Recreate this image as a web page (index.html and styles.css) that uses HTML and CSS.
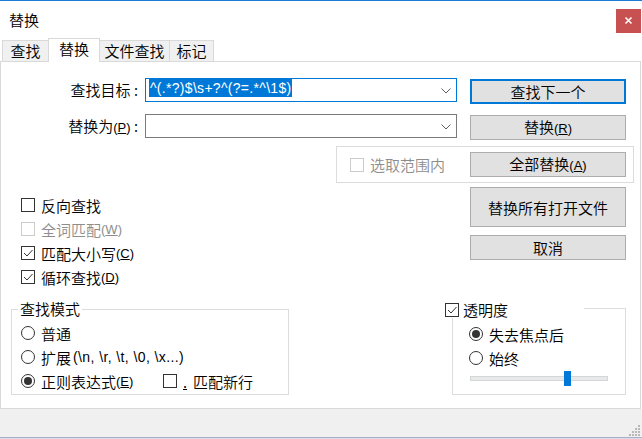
FILE: index.html
```html
<!DOCTYPE html>
<html lang="zh-CN">
<head>
<meta charset="utf-8">
<title>替换</title>
<link rel="stylesheet" href="styles.css">
</head>
<body>
<div class="window">
  <div class="titlebar">
    <span class="title">替换</span>
    <span class="close"><svg width="25" height="24" viewBox="0 0 25 24"><path d="M9.5 8.5 L15.5 14.5 M15.5 8.5 L9.5 14.5" stroke="#fff" stroke-width="1.6" fill="none"/></svg></span>
  </div>
  <div class="tabs">
    <div class="tab w1">查找</div>
    <div class="tab w2 active">替换</div>
    <div class="tab w3">文件查找</div>
    <div class="tab w4">标记</div>
  </div>
  <div class="panel">
    <div class="row row-find">
      <div class="flabel">查找目标 :</div>
      <div class="combo focus">
        <span class="sel">^(.*?)$\s+?^(?=.*^\1$)</span>
        <svg class="chev" width="10" height="6" viewBox="0 0 10 6"><path d="M0.5 0.5 L5 5 L9.5 0.5" stroke="#5f5f5f" stroke-width="1" fill="none"/></svg>
      </div>
      <button class="btn default">查找下一个</button>
    </div>
    <div class="row row-repl">
      <div class="flabel">替换为<span class="a">(<u>P</u>)</span> :</div>
      <div class="combo">
        <span></span>
        <svg class="chev" width="10" height="6" viewBox="0 0 10 6"><path d="M0.5 0.5 L5 5 L9.5 0.5" stroke="#5f5f5f" stroke-width="1" fill="none"/></svg>
      </div>
      <button class="btn btn-r">替换<span class="a">(<u>R</u>)</span></button>
    </div>
    <div class="scope">
      <div class="opt dis"><span class="box"></span>选取范围内</div>
      <button class="btn btn-in">全部替换<span class="a">(<u>A</u>)</span></button>
    </div>
    <div class="mid">
      <div class="opts">
        <div class="opt"><span class="box"></span>反向查找</div>
        <div class="opt dis"><span class="box"></span>全词匹配<span class="a">(<u>W</u>)</span></div>
        <div class="opt"><span class="box"><svg width="12" height="12" viewBox="0 0 12 12"><path d="M2 6 L5 9 L10.5 3" stroke="#333" stroke-width="1" fill="none"/></svg></span>匹配大小写<span class="a">(<u>C</u>)</span></div>
        <div class="opt"><span class="box"><svg width="12" height="12" viewBox="0 0 12 12"><path d="M2 6 L5 9 L10.5 3" stroke="#333" stroke-width="1" fill="none"/></svg></span>循环查找<span class="a">(<u>D</u>)</span></div>
      </div>
      <div class="btncol">
        <button class="btn btn-tall">替换所有打开文件</button>
        <button class="btn btn-cancel">取消</button>
      </div>
    </div>
    <div class="bottom">
      <div class="group mode">
        <div class="legend">查找模式</div>
        <div class="opt rad"><span class="radio"></span>普通</div>
        <div class="opt rad"><span class="radio"></span>扩展 <span class="lat">(\n, \r, \t, \0, \x...)</span></div>
        <div class="opt rad">
          <span class="rlabel"><span class="radio on"></span>正则表达式<span class="a">(<u>E</u>)</span></span>
          <span class="box"></span><u class="dot">.</u>匹配新行
        </div>
      </div>
      <div class="group trans">
        <div class="legend tlegend"><span class="box"><svg width="12" height="12" viewBox="0 0 12 12"><path d="M2 6 L5 9 L10.5 3" stroke="#333" stroke-width="1" fill="none"/></svg></span>透明度</div>
        <div class="opt trad"><span class="radio on"></span>失去焦点后</div>
        <div class="opt trad"><span class="radio"></span>始终</div>
        <div class="slider"><div class="track"><div class="thumb"></div></div></div>
      </div>
    </div>
  </div>
  <div class="footer">
    <svg class="grip" width="11" height="11" viewBox="0 0 11 11" fill="#b9b9b9">
      <rect x="9" y="0" width="2" height="2"/>
      <rect x="6" y="3" width="2" height="2"/><rect x="9" y="3" width="2" height="2"/>
      <rect x="3" y="6" width="2" height="2"/><rect x="6" y="6" width="2" height="2"/><rect x="9" y="6" width="2" height="2"/>
      <rect x="0" y="9" width="2" height="2"/><rect x="3" y="9" width="2" height="2"/><rect x="6" y="9" width="2" height="2"/><rect x="9" y="9" width="2" height="2"/>
    </svg>
  </div>
</div>
</body>
</html>
```
FILE: styles.css
```css
* { box-sizing: border-box; }
html, body { margin: 0; padding: 0; }
body {
  width: 642px;
  height: 439px;
  overflow: hidden;
  background: #dcdde6;
  font-family: "Noto Sans CJK SC", "Noto Sans", sans-serif;
  font-size: 15px;
  font-weight: 350;
  color: #000;
}
.window {
  width: 642px;
  height: 438px;
  background: #fff;
  border-top: 1px solid #1a7ad4;
  display: flex;
  flex-direction: column;
}
.titlebar {
  height: 37px;
  flex: none;
  display: flex;
  align-items: flex-start;
  justify-content: space-between;
}
.title { margin: 9px 0 0 9px; line-height: 20px; }
.close {
  width: 25px;
  height: 24px;
  margin: 8px 1px 0 0;
  background: #c75050;
  display: flex;
}
.tabs {
  height: 23px;
  flex: none;
  display: flex;
  align-items: flex-end;
  padding-left: 2px;
}
.tab {
  height: 21px;
  border: 1px solid #d9d9d9;
  border-bottom: none;
  background: #f0f0f0;
  text-align: center;
  line-height: 19px;
  margin-right: -1px;
}
.tab.active {
  height: 24px;
  background: #fff;
  margin-bottom: -1px;
  position: relative;
}
.w1 { width: 47px; }
.w2 { width: 52px; }
.w3 { width: 71px; }
.w4 { width: 45px; }
.panel {
  width: 641px;
  height: 348px;
  flex: none;
  border: 1px solid #d9d9d9;
  display: flex;
  flex-direction: column;
}
.row { display: flex; align-items: flex-start; }
.row-find { margin-top: 16px; }
.row-repl { margin-top: 10px; }
.flabel {
  width: 144px;
  text-align: right;
  padding-right: 7px;
  line-height: 24px;
  height: 24px;
  white-space: nowrap;
}
.combo {
  width: 312px;
  height: 24px;
  border: 1px solid #7a7a7a;
  background: #fff;
  display: flex;
  align-items: flex-start;
  justify-content: space-between;
  padding-left: 3px;
}
.combo.focus { border-color: #0078d7; }
.sel {
  background: #0078d7;
  color: #fff;
  font-family: "Liberation Sans", Arial, sans-serif;
  font-size: 14px;
  font-weight: 400;
  letter-spacing: 0.3px;
  height: 18px;
  line-height: 18px;
  padding: 0 1px;
  white-space: nowrap;
}
.chev { margin: 9px 5px 0 0; flex: none; }
.btn {
  width: 156px;
  height: 25px;
  border: 1px solid #adadad;
  background: #e1e1e1;
  font: inherit;
  color: #000;
  padding: 0;
  margin: 0 14px 0 auto;
  line-height: 21px;
  flex: none;
}
.btn.default { border: 2px solid #0078d7; margin-top: 1px; }
.btn-r { margin-top: 1px; }
.a {
  font-family: "Liberation Sans", Arial, sans-serif;
  font-size: 13px;
  font-weight: 400;
}
.lat {
  font-family: "Liberation Sans", Arial, sans-serif;
  font-size: 14px;
  font-weight: 400;
  letter-spacing: 0.4px;
  margin-left: 2px;
}
.scope {
  width: 298px;
  height: 37px;
  margin: 6px 6px 0 auto;
  border: 1px solid #dcdcdc;
  display: flex;
  align-items: center;
  padding-left: 13px;
}
.btn-in { margin-right: 7px; }
.opt {
  display: flex;
  align-items: center;
  height: 24px;
  white-space: nowrap;
}
.box {
  width: 14px;
  height: 14px;
  border: 1px solid #333;
  background: #fff;
  margin-right: 6px;
  flex: none;
  display: flex;
}
.dis { color: #8d8d8d; }
.dis .box { border-color: #cccccc; }
.mid { display: flex; align-items: flex-start; }
.opts { padding-left: 20px; margin-top: 10px; }
.btncol {
  margin: 4px 14px 0 auto;
  display: flex;
  flex-direction: column;
  gap: 8px;
}
.btncol .btn { margin: 0; }
.btn-tall { height: 40px; }
.bottom { display: flex; align-items: flex-start; margin-top: 19px; }
.group {
  border: 1px solid #dcdcdc;
  display: flex;
  flex-direction: column;
}
.mode { width: 278px; height: 86px; margin: 1px 0 0 10px; }
.trans { width: 174px; height: 87px; margin: 0 14px 0 auto; }
.legend {
  align-self: flex-start;
  background: #fff;
  height: 16px;
  line-height: 16px;
  margin: -9px 0 4px 6px;
  padding: 0 2px;
}
.tlegend {
  width: 139px;
  margin: -7px 0 4px -8px;
  padding: 0;
  display: flex;
  align-items: center;
}
.tlegend .box { margin-right: 4px; }
.radio {
  width: 14px;
  height: 14px;
  border: 1px solid #333;
  border-radius: 50%;
  background: #fff;
  margin-right: 6px;
  flex: none;
  display: flex;
  align-items: center;
  justify-content: center;
}
.radio.on::after {
  content: "";
  width: 8px;
  height: 8px;
  border-radius: 50%;
  background: #333;
}
.rad { padding-left: 9px; }
.rlabel { width: 142px; display: flex; align-items: center; }
.dot { margin-right: 6px; }
.trad { padding-left: 16px; }
.slider {
  height: 16px;
  display: flex;
  align-items: center;
  padding-left: 17px;
}
.track {
  width: 138px;
  height: 5px;
  background: #e7eaea;
  border: 1px solid #d6d6d6;
  display: flex;
  align-items: center;
}
.thumb {
  width: 7px;
  height: 15px;
  background: #0078d7;
  margin-left: 93px;
  flex: none;
}
.footer {
  height: 29px;
  flex: none;
  background: #f0f0f0;
  border-bottom: 1px solid #a9adc8;
  display: flex;
  justify-content: flex-end;
  align-items: flex-end;
}
.grip { margin: 0 2px 1px 0; }
```
